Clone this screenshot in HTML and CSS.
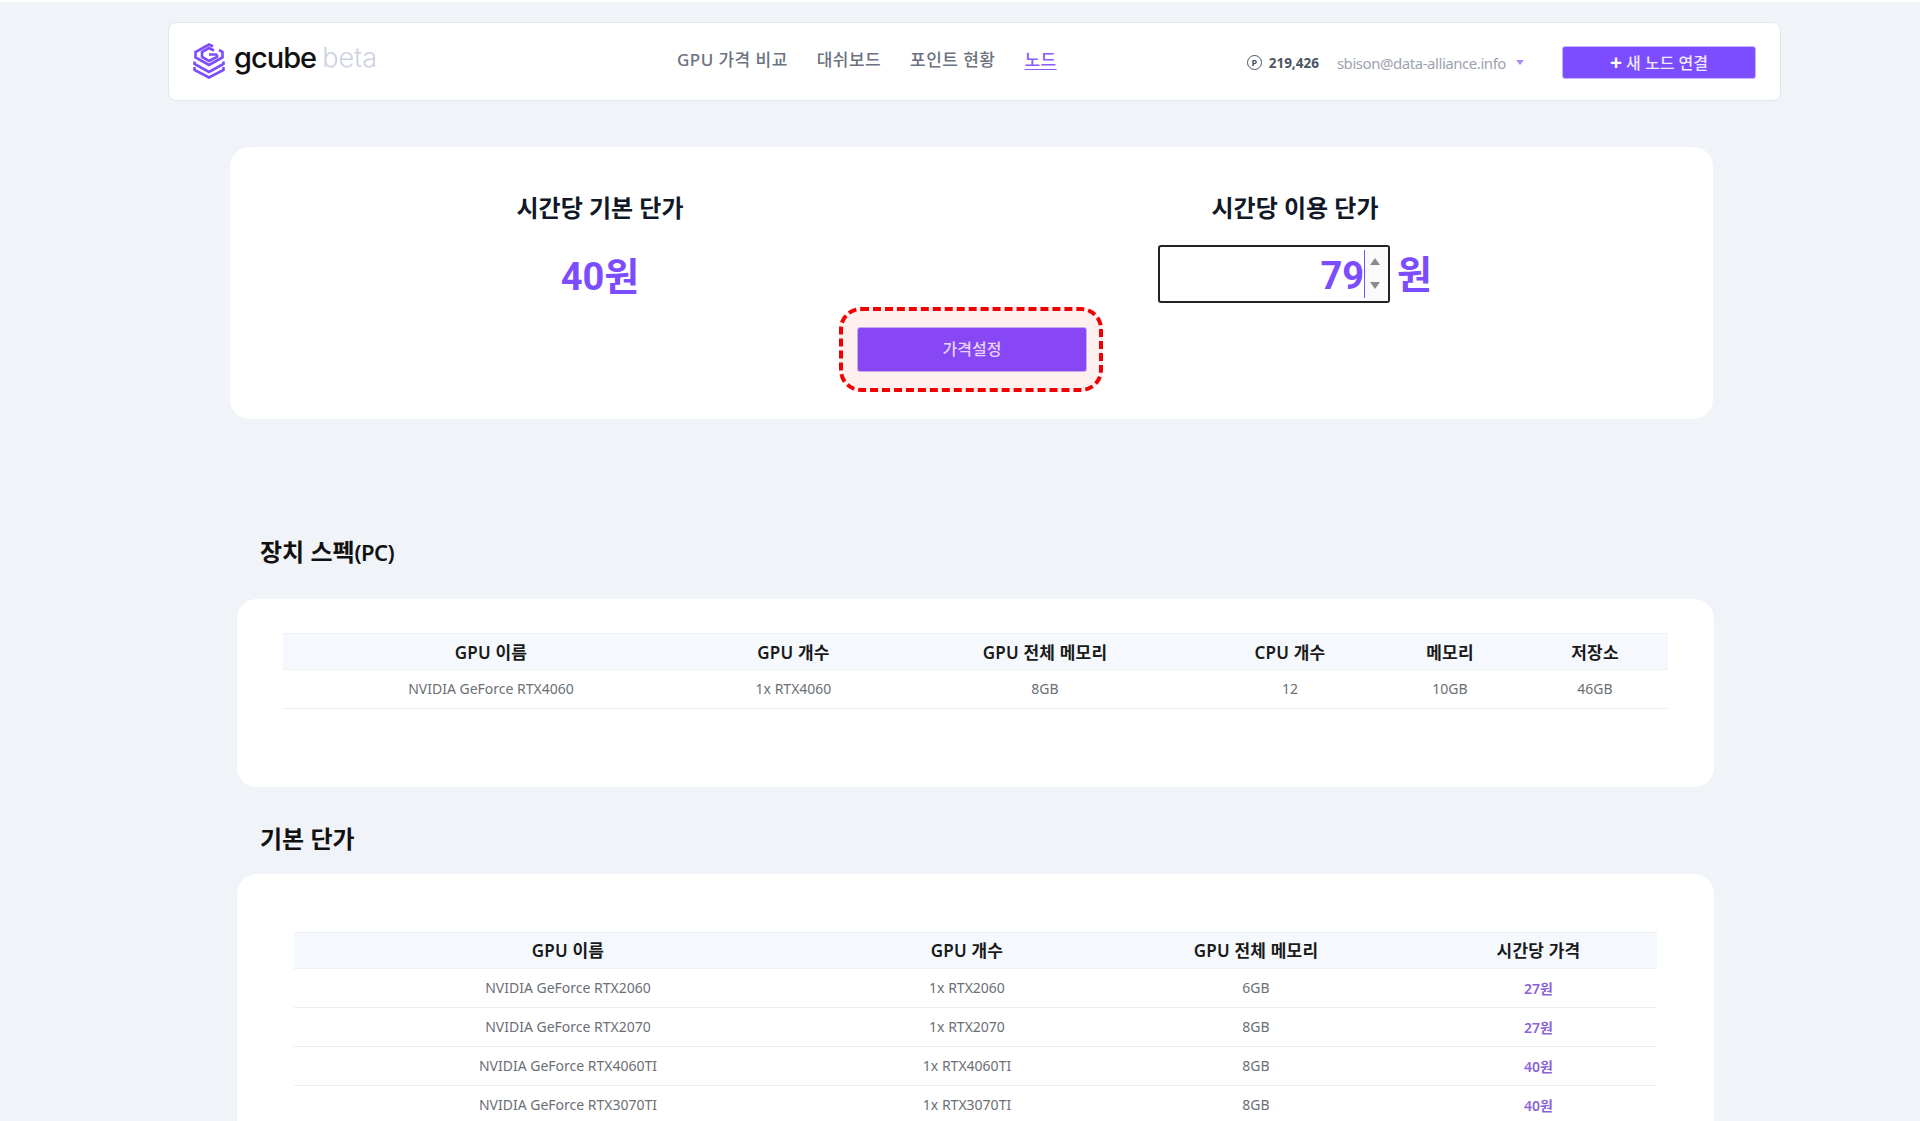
FILE: index.html
```html
<!DOCTYPE html>
<html lang="ko">
<head>
    <meta charset="UTF-8">
    <meta name="viewport" content="width=device-width, initial-scale=1.0">
    <title>gcube beta</title>
    <link rel="stylesheet" href="styles.css">
</head>
<body>
    <div class="page">
        <header class="topbar">
            <a class="logo" href="#">
                <svg class="logo-mark" width="32" height="36" viewBox="0 0 32 36" fill="none" stroke="#7c4dff" stroke-width="2.600">
                    <path d="M20 3.500 16 1.500 2.500 9v5.500L16 22l13.500-7.500V9L26 7"/>
                    <path d="M24 11.500h-8M24 11.500v2.500l-8 4-7-4v-5l7-4 5 2.500"/>
                    <path d="M1.500 18.500v2.500L16 29l14.500-8v-2.500"/>
                    <path d="M1.500 24v3L16 34.500 30.500 27v-3"/>
                </svg>
                <span class="logo-name">gcube</span>
                <span class="logo-beta">beta</span>
            </a>
            <nav class="nav">
                <a href="#">GPU 가격 비교</a>
                <a href="#">대쉬보드</a>
                <a href="#">포인트 현황</a>
                <a href="#" class="active">노드</a>
            </nav>
            <div class="account">
                <span class="points-icon">P</span>
                <span class="points">219,426</span>
                <span class="email">sbison@data-alliance.info</span>
                <span class="caret"></span>
                <button class="btn-new"><span class="plus">+</span> 새 노드 연결</button>
            </div>
        </header>

        <section class="price-panel">
            <div class="price-cols">
                <div class="price-col">
                    <h2>시간당 기본 단가</h2>
                    <div class="price-value">40원</div>
                </div>
                <div class="price-col price-col-right">
                    <h2>시간당 이용 단가</h2>
                    <div class="price-edit">
                        <div class="price-input">
                            <span class="input-text">79</span>
                            <span class="input-cursor"></span>
                            <span class="spinner">
                                <i class="spin-up"></i>
                                <i class="spin-down"></i>
                            </span>
                        </div>
                        <span class="price-value">원</span>
                    </div>
                </div>
            </div>
            <div class="mark">
                <button class="btn-set">가격설정</button>
            </div>
        </section>

        <h3 class="section-title">장치 스펙<span class="title-latin">(PC)</span></h3>
        <section class="card card-spec">
            <table class="spec-table">
                <colgroup>
                    <col class="s1"><col class="s2"><col class="s3"><col class="s4"><col class="s5"><col class="s6">
                </colgroup>
                <thead>
                    <tr><th>GPU 이름</th><th>GPU 개수</th><th>GPU 전체 메모리</th><th>CPU 개수</th><th>메모리</th><th>저장소</th></tr>
                </thead>
                <tbody>
                    <tr><td>NVIDIA GeForce RTX4060</td><td>1x RTX4060</td><td>8GB</td><td>12</td><td>10GB</td><td>46GB</td></tr>
                </tbody>
            </table>
        </section>

        <h3 class="section-title section-title-2">기본 단가</h3>
        <section class="card card-base">
            <table class="base-table">
                <colgroup>
                    <col class="b1"><col class="b2"><col class="b3"><col class="b4">
                </colgroup>
                <thead>
                    <tr><th>GPU 이름</th><th>GPU 개수</th><th>GPU 전체 메모리</th><th>시간당 가격</th></tr>
                </thead>
                <tbody>
                    <tr><td>NVIDIA GeForce RTX2060</td><td>1x RTX2060</td><td>6GB</td><td class="price">27원</td></tr>
                    <tr><td>NVIDIA GeForce RTX2070</td><td>1x RTX2070</td><td>8GB</td><td class="price">27원</td></tr>
                    <tr><td>NVIDIA GeForce RTX4060TI</td><td>1x RTX4060TI</td><td>8GB</td><td class="price">40원</td></tr>
                    <tr><td>NVIDIA GeForce RTX3070TI</td><td>1x RTX3070TI</td><td>8GB</td><td class="price">40원</td></tr>
                </tbody>
            </table>
        </section>
    </div>
</body>
</html>
```

FILE: styles.css
```css
* {
    box-sizing: border-box;
}
html, body {
    margin: 0;
    height: 100%;
    overflow: hidden;
}
body {
    background-color: #ffffff;
    font-family: "Noto Sans", "Noto Sans CJK KR", sans-serif;
    color: #111827;
}
a {
    text-decoration: none;
}
.page {
    height: 100%;
    margin-top: 2px;
    padding-top: 20px;
    background-color: #f0f3f8;
    overflow: hidden;
}

/* top bar */
.topbar {
    display: flex;
    align-items: center;
    width: 1613px;
    height: 79px;
    margin-left: 168px;
    padding: 0 24px;
    background-color: #ffffff;
    border: 1px solid #e3e6ec;
    border-radius: 8px;
}
.logo {
    display: flex;
    align-items: center;
    width: 186px;
    height: 100%;
    padding-bottom: 1px;
}
.logo-mark {
    flex: none;
    margin-right: 9px;
}
.logo-name {
    font-family: Inter, sans-serif;
    font-size: 29px;
    font-weight: 500;
    letter-spacing: -1px;
    color: #111111;
    margin-bottom: 8px;
}
.logo-beta {
    font-family: Inter, sans-serif;
    font-size: 27px;
    font-weight: 300;
    color: #cdd2e3;
    margin-left: 6px;
    margin-bottom: 8px;
}
.nav {
    display: flex;
    gap: 29px;
    margin-left: 298px;
    font-size: 17px;
    font-weight: 500;
    letter-spacing: 0.45px;
    margin-bottom: 6px;
}
.nav a {
    color: #6b7280;
}
.nav a.active {
    color: #8b5cf6;
    text-decoration: underline;
    text-underline-offset: 3px;
}
.account {
    display: flex;
    align-items: center;
    margin-left: auto;
    padding-top: 2px;
}
.points-icon {
    display: flex;
    align-items: center;
    justify-content: center;
    width: 15px;
    height: 15px;
    border: 1.500px solid #4b5563;
    border-radius: 50%;
    font-size: 9px;
    font-weight: 700;
    color: #4b5563;
    margin-right: 7px;
}
.points {
    font-size: 13.500px;
    font-weight: 700;
    color: #4b5563;
    margin-right: 18px;
}
.email {
    font-size: 15px;
    letter-spacing: -0.45px;
    color: #9ca3af;
    padding-top: 1px;
}
.caret {
    width: 0;
    height: 0;
    margin-left: 10px;
    margin-right: 38px;
    border-left: 4.500px solid transparent;
    border-right: 4.500px solid transparent;
    border-top: 5px solid #a78bfa;
}
.btn-new {
    width: 194px;
    height: 33px;
    border: 1px solid #c9b5ff;
    border-radius: 3px;
    background-color: #7c4dff;
    color: #efe9ff;
    font-family: inherit;
    font-size: 16px;
    font-weight: 500;
    line-height: 1;
}
.plus {
    font-size: 21px;
    font-weight: 700;
    line-height: 16px;
    vertical-align: -1px;
    color: #ffffff;
}

/* price panel */
.price-panel {
    width: 1483px;
    height: 272px;
    margin: 46px 0 0 230px;
    padding-top: 43px;
    background-color: #ffffff;
    border-radius: 20px;
}
.price-cols {
    display: grid;
    grid-template-columns: 740px 650px;
    height: 117px;
}
.price-col {
    display: flex;
    flex-direction: column;
    align-items: center;
}
.price-col h2 {
    margin: 0 0 26px;
    font-size: 24px;
    font-weight: 700;
    line-height: 36px;
    color: #111827;
}
.price-value {
    font-family: Roboto, "Noto Sans CJK KR", sans-serif;
    font-size: 38px;
    font-weight: 700;
    line-height: 50px;
    color: #7c4dff;
}
.price-col-right h2 {
    margin-bottom: 19px;
}
.price-edit {
    display: flex;
    align-items: center;
    gap: 7px;
}
.price-edit .price-value {
    padding-top: 2px;
}
.price-input {
    display: flex;
    justify-content: flex-end;
    align-items: center;
    width: 232px;
    height: 58px;
    border: 2px solid #222222;
    border-radius: 3px;
    background-color: #ffffff;
}
.input-text {
    padding-top: 3px;
    font-family: Roboto, sans-serif;
    font-size: 38px;
    font-weight: 700;
    color: #7c4dff;
}
.input-cursor {
    width: 1px;
    height: 48px;
    background-color: #7c4dff;
}
.spinner {
    display: flex;
    flex-direction: column;
    justify-content: space-between;
    align-items: center;
    width: 23px;
    height: 100%;
    padding: 11px 3px 12px 0;
    background-color: #fafafa;
}
.spinner i {
    width: 0;
    height: 0;
    border-left: 5px solid transparent;
    border-right: 5px solid transparent;
}
.spin-up {
    border-bottom: 7px solid #8a8a8a;
}
.spin-down {
    border-top: 7px solid #8a8a8a;
}
.mark {
    width: 264px;
    height: 85px;
    margin: 0 0 0 609px;
    padding: 16px 14px;
    background-color: #fff0f0;
    border: 4px dashed #f00000;
    border-radius: 22px;
}
.btn-set {
    display: block;
    width: 230px;
    height: 45px;
    padding: 0 0 3px;
    border: 1px solid #c9a8f0;
    border-radius: 3px;
    background-color: #8847f5;
    color: #e4d6fb;
    font-family: inherit;
    font-size: 16px;
    font-weight: 500;
}

/* sections */
.section-title {
    margin: 118px 0 0 260px;
    font-size: 24px;
    font-weight: 600;
    line-height: 30px;
    color: #111111;
}
.title-latin {
    font-size: 22px;
    letter-spacing: -0.6px;
}
.section-title-2 {
    margin-top: 37px;
}
.card {
    width: 1477px;
    margin-left: 237px;
    background-color: #ffffff;
    border-radius: 20px;
}
.card-spec {
    height: 188px;
    margin-top: 32px;
    padding: 34px 46px 0;
}
.card-base {
    height: 340px;
    margin-top: 20px;
    padding: 58px 57px 0;
}

/* tables */
table {
    width: 100%;
    border-collapse: collapse;
    table-layout: fixed;
}
th {
    height: 36px;
    padding: 0 0 1px;
    background-color: #f5f9fe;
    border-top: 1px solid #edf1f6;
    border-bottom: 1px solid #edf1f6;
    font-size: 17px;
    font-weight: 600;
    letter-spacing: 0.2px;
    color: #1a1a1a;
    text-align: center;
}
.base-table th {
    padding-bottom: 2px;
}
td {
    height: 39px;
    padding: 0 0 1px;
    border-bottom: 1px solid #eceef2;
    font-size: 14px;
    color: #6b6f76;
    text-align: center;
}
.price {
    font-weight: 600;
    color: #8a63d8;
}
.s1 { width: 416px; }
.s2 { width: 189px; }
.s3 { width: 314px; }
.s4 { width: 176px; }
.s5 { width: 144px; }
.s6 { width: 146px; }
.b1 { width: 548px; }
.b2 { width: 250px; }
.b3 { width: 328px; }
.b4 { width: 237px; }
```
